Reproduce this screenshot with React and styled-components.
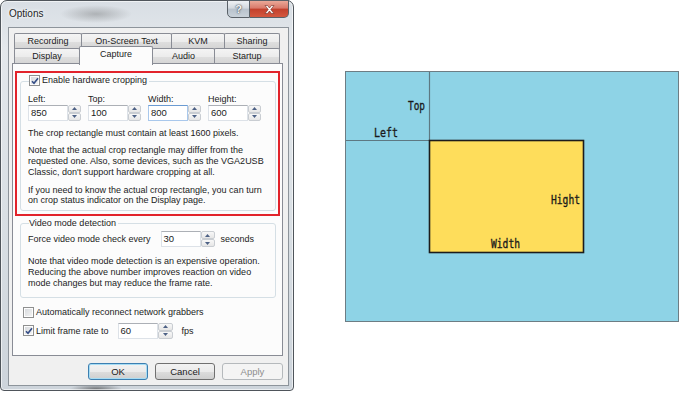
import React from "react";
import styled, { createGlobalStyle, css } from "styled-components";

const GlobalStyle = createGlobalStyle`
  html, body { margin: 0; padding: 0; background: #fff; }
  body { font-family: "Liberation Sans", Arial, sans-serif; color: #1b1b1b; }
`;

const Page = styled.div`
  display: flex;
  align-items: flex-start;
  width: 680px;
  height: 394px;
  overflow: hidden;
  background: #fff;
`;

const Window = styled.div`
  flex: none;
  width: 294px;
  height: 391px;
  box-sizing: border-box;
  border: 1px solid #4f555b;
  border-radius: 7px 7px 4px 4px;
  padding: 0 4px 4px 7px;
  display: flex;
  flex-direction: column;
  background:
    radial-gradient(ellipse 36px 9px at 95px 13px, rgba(70, 70, 70, 0.3), transparent),
    radial-gradient(ellipse 26px 5px at 95px 388px, rgba(40, 40, 40, 0.55), transparent),
    linear-gradient(180deg, #d8dee4 0%, #e4e8ec 12%, #d9dfe4 55%, #cdd4db 100%);
  box-shadow: inset 0 0 0 1px rgba(255, 255, 255, 0.6);
`;

const TitleBar = styled.div`
  height: 26px;
  display: flex;
  justify-content: space-between;
  align-items: flex-start;
`;

const Title = styled.span`
  margin: 7px 0 0 1px;
  font-size: 10px;
  color: #1e1e1e;
  text-shadow: 0 0 5px #fff, 0 0 3px #fff;
`;

const Caption = styled.div`
  display: flex;
  margin-top: -1px;
`;

const CaptionButton = styled.div`
  width: ${p => p.$w}px;
  height: 18px;
  box-sizing: border-box;
  border: 1px solid #5a6168;
  display: flex;
  align-items: center;
  justify-content: center;
  font-size: 11px;
  font-weight: bold;
  color: #fff;
  ${p => p.$close
    ? css`
      border-radius: 0 0 5px 0;
      border-left: none;
      background: linear-gradient(180deg, #eaa898 0%, #d9796a 45%, #c2402c 50%, #d4583f 100%);
    `
    : css`
      border-radius: 0 0 0 5px;
      background: linear-gradient(180deg, #eef1f4 0%, #d3d9df 45%, #b8c2cc 50%, #c9d2da 100%);
      color: #f4f6f8;
      text-shadow: 0 0 2px #3c4650, 0 0 1px #3c4650;
    `}
`;

const Client = styled.div`
  flex: 1;
  display: flex;
  flex-direction: column;
  background: #f0f0f0;
  border: 1px solid #8d949b;
  padding: 5px 0 0 3px;
`;

const TabRow = styled.div`
  display: flex;
  height: 16px;
  margin: ${p => (p.$front ? "-1px 0 0 2px" : "0 0 0 2px")};
`;

const Tab = styled.div`
  flex: none;
  width: ${p => p.$w}px;
  height: 16px;
  box-sizing: border-box;
  margin-right: -1px;
  border: 1px solid #898c95;
  border-bottom: none;
  border-radius: 2px 2px 0 0;
  background: linear-gradient(180deg, #f4f4f4 0%, #ececec 50%, #dfdfdf 51%, #d4d4d4 100%);
  font-size: 9px;
  line-height: 15px;
  text-align: center;
  ${p => p.$active && css`
    position: relative;
    z-index: 3;
    height: 19px;
    margin-top: -2px;
    background: #fcfcfc;
    line-height: 15px;
  `}
`;

const Panel = styled.div`
  width: 271px;
  height: 293px;
  box-sizing: border-box;
  margin-top: -1px;
  border: 1px solid #898c95;
  background: #fcfcfc;
  padding: 7px 2px 0 2px;
  display: flex;
  flex-direction: column;
`;

const Highlight = styled.div`
  border: 2px solid #e2232b;
  padding: 2px 2px 3px 3px;
`;

const Group = styled.fieldset`
  margin: ${p => p.$mt || 0}px 0 0 ${p => p.$ml || 0}px;
  width: ${p => p.$w}px;
  box-sizing: border-box;
  padding: 0 6px ${p => p.$pb}px 7px;
  border: 1px solid #d5dfe5;
  border-radius: 3px;
  min-width: 0;
`;

const Legend = styled.legend`
  padding: 0 2px 0 0;
  margin-left: 1px;
  font-size: 9px;
  line-height: 11px;
`;

const LegendInner = styled.span`
  display: inline-flex;
  align-items: center;
  gap: 2px;
`;

const FieldGrid = styled.div`
  display: grid;
  grid-template-columns: repeat(4, 60px);
  margin-top: 6px;
`;

const Field = styled.div`
  display: flex;
  flex-direction: column;
`;

const Label = styled.div`
  font-size: 9px;
  line-height: 11px;
`;

const Spin = styled.div`
  display: flex;
  height: 16px;
`;

const Input = styled.div`
  width: ${p => p.$w}px;
  height: 16px;
  box-sizing: border-box;
  border: 1px solid ${p => (p.$focus ? "#a9c8ec" : "#dde2e8")};
  border-top-color: ${p => (p.$focus ? "#6b9bd2" : "#acb0b6")};
  background: #fff;
  font-size: 9.5px;
  line-height: 14px;
  padding-left: 2px;
`;

const Stepper = styled.div`
  width: ${p => p.$w || 13}px;
  display: flex;
  flex-direction: column;
`;

const StepButton = styled.div`
  flex: 1;
  box-sizing: border-box;
  border: 1px solid #c9cdd2;
  border-radius: 2px;
  background: linear-gradient(180deg, #f8f8f8, #e6e6e6);
  display: flex;
  align-items: center;
  justify-content: center;
`;

const Text = styled.p`
  margin: ${p => p.$mt}px 0 0;
  font-size: 9px;
  line-height: 10.8px;
  white-space: nowrap;
`;

const InlineRow = styled.div`
  display: flex;
  align-items: center;
  font-size: 9px;
  margin-top: ${p => p.$mt}px;
`;

const Gap = styled.span`
  width: ${p => p.$w}px;
  flex: none;
`;

const CheckRow = styled.div`
  display: flex;
  align-items: center;
  gap: 2px;
  height: ${p => p.$h}px;
  margin: ${p => p.$mt}px 0 0 8px;
  font-size: 9px;
`;

const Box = styled.span`
  flex: none;
  width: 11px;
  height: 11px;
  box-sizing: border-box;
  border: 1px solid #8e8f8f;
  background: linear-gradient(135deg, #d4d7db 0%, #f6f6f6 100%);
  box-shadow: inset 0 0 0 1px #fdfdfd;
  display: inline-flex;
  align-items: center;
  justify-content: center;
`;

const ButtonRow = styled.div`
  width: 271px;
  display: flex;
  justify-content: flex-end;
  gap: 7px;
  margin-top: 7px;
`;

const Button = styled.div`
  width: ${p => p.$w || 60}px;
  height: 17px;
  box-sizing: border-box;
  border: 1px solid #707070;
  border-radius: 3px;
  background: linear-gradient(180deg, #f2f2f2 0%, #ebebeb 50%, #dddddd 51%, #cfcfcf 100%);
  font-size: 9.5px;
  display: flex;
  align-items: center;
  justify-content: center;
  ${p => p.$default && css`
    border-color: #3c7fb1;
    box-shadow: inset 0 0 0 1px #a6dcf4;
  `}
  ${p => p.$disabled && css`
    border-color: #b5b9bc;
    background: #f4f4f4;
    color: #8e8e8e;
  `}
`;

const Diagram = styled.svg`
  flex: none;
  display: block;
  margin: 71px 0 0 51px;
`;

function Arrow({ down }) {
  return (
    <svg width="5" height="3" viewBox="0 0 5 3">
      <path d={down ? "M0 0H5L2.5 3Z" : "M0 3H5L2.5 0Z"} fill="#4d6185" />
    </svg>
  );
}

function SpinBox({ value, w = 40, sw, focus }) {
  return (
    <Spin>
      <Input $w={w} $focus={focus}>{value}</Input>
      <Stepper $w={sw}>
        <StepButton><Arrow /></StepButton>
        <StepButton><Arrow down /></StepButton>
      </Stepper>
    </Spin>
  );
}

function Check({ checked }) {
  return (
    <Box>
      {checked && (
        <svg width="8" height="8" viewBox="0 0 8 8">
          <path d="M1 4.2L3 6.3L7 1.2" fill="none" stroke="#344d86" strokeWidth="1.6" />
        </svg>
      )}
    </Box>
  );
}

const backTabs = [
  { name: "Recording", w: 68 },
  { name: "On-Screen Text", w: 91 },
  { name: "KVM", w: 54 },
  { name: "Sharing", w: 56 },
];

const frontTabs = [
  { name: "Display", w: 66 },
  { name: "Capture", w: 74, active: true },
  { name: "Audio", w: 63 },
  { name: "Startup", w: 66 },
];

const cropFields = [
  { label: "Left:", value: "850" },
  { label: "Top:", value: "100" },
  { label: "Width:", value: "800", focus: true },
  { label: "Height:", value: "600" },
];

function Options() {
  return (
    <Window>
      <TitleBar>
        <Title>Options</Title>
        <Caption>
          <CaptionButton $w={23}>?</CaptionButton>
          <CaptionButton $w={39} $close>
            <svg width="11" height="9" viewBox="0 0 11 9">
              <path
                d="M1 0.5H3.5L5.5 3L7.5 0.5H10L6.8 4.5L10 8.5H7.5L5.5 6L3.5 8.5H1L4.2 4.5Z"
                fill="#fff"
                stroke="#6b2a22"
                strokeWidth="0.6"
              />
            </svg>
          </CaptionButton>
        </Caption>
      </TitleBar>
      <Client>
        <TabRow>
          {backTabs.map(t => (
            <Tab key={t.name} $w={t.w}>{t.name}</Tab>
          ))}
        </TabRow>
        <TabRow $front>
          {frontTabs.map(t => (
            <Tab key={t.name} $w={t.w} $active={t.active}>{t.name}</Tab>
          ))}
        </TabRow>
        <Panel>
          <Highlight>
            <Group $w={256} $pb={4}>
              <Legend>
                <LegendInner>
                  <Check checked />
                  Enable hardware cropping
                </LegendInner>
              </Legend>
              <FieldGrid>
                {cropFields.map(f => (
                  <Field key={f.label}>
                    <Label>{f.label}</Label>
                    <SpinBox value={f.value} focus={f.focus} />
                  </Field>
                ))}
              </FieldGrid>
              <Text $mt={7}>The crop rectangle must contain at least 1600 pixels.</Text>
              <Text $mt={7}>
                Note that the actual crop rectangle may differ from the<br />
                requested one. Also, some devices, such as the VGA2USB<br />
                Classic, don't support hardware cropping at all.
              </Text>
              <Text $mt={7}>
                If you need to know the actual crop rectangle, you can turn<br />
                on crop status indicator on the Display page.
              </Text>
            </Group>
          </Highlight>
          <Group $w={256} $ml={5} $mt={2} $pb={8}>
            <Legend>Video mode detection</Legend>
            <InlineRow $mt={2}>
              Force video mode check every
              <Gap $w={10} />
              <SpinBox value="30" w={40} sw={14} />
              <Gap $w={6} />
              seconds
            </InlineRow>
            <Text $mt={9}>
              Note that video mode detection is an expensive operation.<br />
              Reducing the above number improves reaction on video<br />
              mode changes but may reduce the frame rate.
            </Text>
          </Group>
          <CheckRow $h={13} $mt={8}>
            <Check />
            Automatically reconnect network grabbers
          </CheckRow>
          <CheckRow $h={16} $mt={4}>
            <Check checked />
            Limit frame rate to
            <Gap $w={5} />
            <SpinBox value="60" w={40} sw={15} />
            <Gap $w={5} />
            fps
          </CheckRow>
        </Panel>
        <ButtonRow>
          <Button $default>OK</Button>
          <Button>Cancel</Button>
          <Button $w={61} $disabled>Apply</Button>
        </ButtonRow>
      </Client>
    </Window>
  );
}

function CropDiagram() {
  const label = {
    fontFamily: "'DejaVu Sans Mono', 'Liberation Mono', monospace",
    fontSize: 13,
    fill: "#1a1a1a",
    stroke: "#1a1a1a",
    strokeWidth: 0.35,
    lengthAdjust: "spacingAndGlyphs",
  };
  return (
    <Diagram width="335" height="252" viewBox="0 0 335 252">
      <rect x="0.5" y="0.5" width="333" height="250" fill="#8ed3e6" stroke="#6d7d84" />
      <line x1="84.5" y1="1" x2="84.5" y2="69" stroke="#5d7882" strokeWidth="1.2" />
      <line x1="1" y1="69.5" x2="84" y2="69.5" stroke="#5d7882" strokeWidth="1.2" />
      <rect x="84.5" y="69.5" width="154" height="112" fill="#fedd5b" stroke="#1c1c1c" strokeWidth="1.6" />
      <text x="63" y="39" textLength="17" {...label}>Top</text>
      <text x="29" y="66" textLength="24" {...label}>Left</text>
      <text x="206" y="133" textLength="29" {...label}>Hight</text>
      <text x="146" y="177" textLength="29" {...label}>Width</text>
    </Diagram>
  );
}

export default function App() {
  return (
    <>
      <GlobalStyle />
      <Page>
        <Options />
        <CropDiagram />
      </Page>
    </>
  );
}
